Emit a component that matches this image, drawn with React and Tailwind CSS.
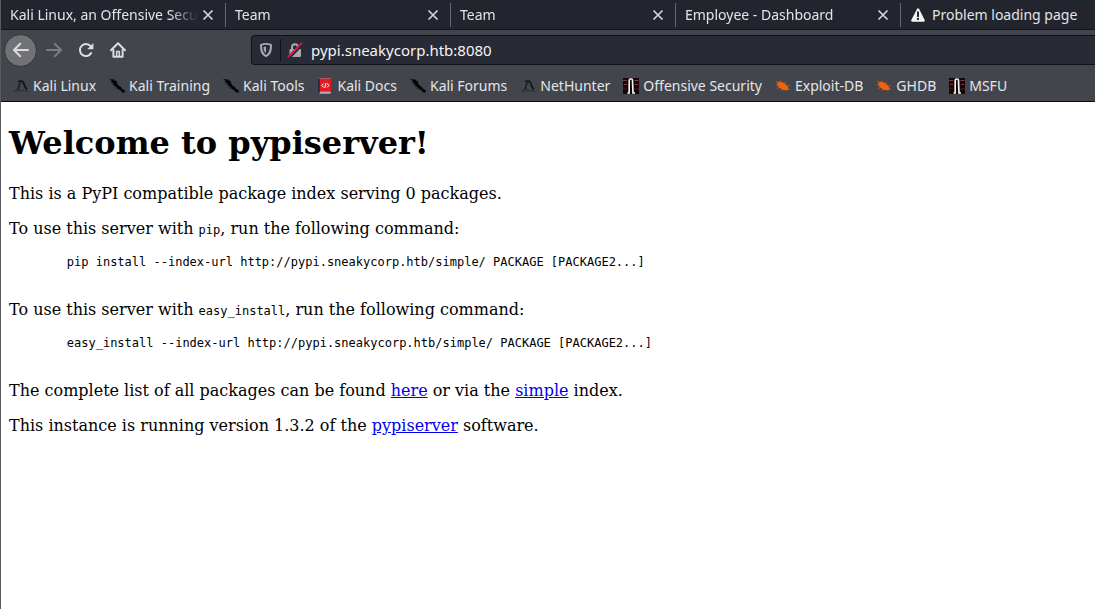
const CloseIcon = () => (
  <svg viewBox="0 0 12 12" className="size-3" fill="none" stroke="#d3d4d8" strokeWidth="1.7">
    <path d="M1.5 1.5 10.5 10.5M10.5 1.5 1.5 10.5" />
  </svg>
);

const WarningIcon = () => (
  <svg viewBox="0 0 16 16" className="size-4 shrink-0">
    <path d="M7 1.9a1.2 1.2 0 0 1 2.1 0l5.6 11a1.2 1.2 0 0 1-1 1.8H2.3a1.2 1.2 0 0 1-1-1.8z" fill="#f4f4f5" />
    <path d="M8 5.2v4" stroke="#23252e" strokeWidth="2" strokeLinecap="round" />
    <circle cx="8" cy="12" r="1.15" fill="#23252e" />
  </svg>
);

const BackIcon = () => (
  <svg viewBox="0 0 16 16" className="size-4" fill="none" stroke="currentColor" strokeWidth="2" strokeLinecap="round" strokeLinejoin="round">
    <path d="M15 8H1.5M7.2 1.8 1 8l6.2 6.2" />
  </svg>
);

const ForwardIcon = () => (
  <svg viewBox="0 0 16 16" className="size-4" fill="none" stroke="currentColor" strokeWidth="2" strokeLinecap="round" strokeLinejoin="round">
    <path d="M1 8h13.5M8.8 1.8 15 8l-6.2 6.2" />
  </svg>
);

const ReloadIcon = () => (
  <svg viewBox="0 0 16 16" className="size-4">
    <path d="M12.6 4.2A6 6 0 1 0 13.2 11" fill="none" stroke="currentColor" strokeWidth="2" strokeLinecap="round" />
    <path d="M15.4 1v5.6a.6.6 0 0 1-.6.6H9.2z" fill="currentColor" />
  </svg>
);

const HomeIcon = () => (
  <svg viewBox="0 0 16 16" className="size-4" fill="none" stroke="currentColor" strokeLinecap="round" strokeLinejoin="round">
    <path d="M1 8.3 8 1.3l7 7" strokeWidth="2" />
    <path d="M3.4 8v6.8h9.2V8" strokeWidth="2" />
    <path d="M6.7 14V9.4h2.6V14" strokeWidth="1.5" />
  </svg>
);

const ShieldIcon = () => (
  <svg viewBox="0 0 16 16" className="size-4">
    <path d="M8 1.9c1.9 0 3.6.4 5 .9.1 5.7-.6 9.2-5 11.3-4.4-2.1-5.1-5.6-5-11.3 1.4-.5 3.1-.9 5-.9z" fill="none" stroke="#a9aaae" strokeWidth="1.9" strokeLinejoin="round" />
    <path d="M8 4.7v6.5C6 9.7 5.6 8 5.5 5.1 6.3 4.8 7.2 4.7 8 4.7z" fill="#a9aaae" />
  </svg>
);

const InsecureIcon = () => (
  <svg viewBox="0 0 16 16" className="size-4">
    <path d="M5 8V5.2a3 3 0 0 1 6 0V8" fill="none" stroke="#a9aaae" strokeWidth="2" />
    <rect x="2.5" y="7" width="11.5" height="8" rx="1" fill="#a9aaae" />
    <path d="M2.5 16 15 3.3" stroke="#282a35" strokeWidth="2" />
    <path d="M1.3 14.7 14.7 1.2" stroke="#f5093f" strokeWidth="1.8" strokeLinecap="round" />
  </svg>
);

const DragonIcon = () => (
  <svg viewBox="0 0 16 16" className="size-4 shrink-0" fill="none">
    <path d="M5 3.8C7 2.5 10 2.600 10.600 5c.5 2 1.200 4 3.200 6.500" stroke="#101114" strokeWidth="1.600" />
    <path d="M8.300 4.500C6.300 6 5.200 8 5.600 10.800" stroke="#15161a" strokeWidth="1.300" />
    <path d="M2.500 11.800c1.500-.9 3-.7 4.300-.5" stroke="#24262c" strokeWidth="1" />
    <path d="M1 13.500c4-1.200 10-1.200 14 0" stroke="#2b2d33" strokeWidth="1" />
  </svg>
);

const KnifeIcon = () => (
  <svg viewBox="0 0 16 16" className="size-4 shrink-0" fill="#050506">
    <path d="M0 .5 2.500 1.500 5 1.200l1.200 1.600 1.500.2.400 2.200 1.400 2.200 2.400 1.600 1.300 2 2.200 1.100.600 1.400-.8 1.300-2.300-.5-1.500-2-2.500-1.300L7 8.800 4.800 7.600 4.600 6 3 4.600 2.500 2.900z" />
    <path d="M1.500 3.800 3.800 7M5.500 9.500l2.500 1.300" stroke="#24252a" strokeWidth=".8" />
  </svg>
);

const DocsIcon = () => (
  <svg viewBox="0 0 16 16" className="size-4 shrink-0">
    <path d="M2.500.5h11v15h-11z" fill="#dedede" />
    <path d="M2 .5h12v13.200H2z" fill="#df1b23" />
    <path d="M1 1h1.800v14H1z" fill="#272a43" />
    <path d="M2.500 14h10.500" stroke="#8f6064" strokeWidth=".8" />
    <path d="M6.700 5.500 4.700 7.500l2 1.700M10 5.500l2 1.900-2 2M9 5l-1.300 5" fill="none" stroke="#fff" strokeWidth="1" />
  </svg>
);

const TowerIcon = () => (
  <svg viewBox="0 0 16 16" className="size-4 shrink-0">
    <path d="M0 0h16v16H0z" fill="#160607" />
    <path d="M0 2.500h4M1 6.500h3M11.500 2.500h4M12 6.500h3" stroke="#754044" strokeWidth="1.200" />
    <path d="M0 10.500h4M11.500 11h4.500" stroke="#3b0d10" strokeWidth="2" />
    <path d="M6.200 15.500V2.500C6.200 1.500 6.500 1 7.500 1h1c.8 0 1 .5 1 1.500L10 15.500" fill="#050505" stroke="#f3efef" strokeWidth="1.700" />
    <path d="M4.500 15h2M9.500 15h2.500" stroke="#f3efef" strokeWidth="1.500" />
  </svg>
);

const BugIcon = () => (
  <svg viewBox="0 0 16 16" className="size-4 shrink-0">
    <path d="M2.200 4.500C4 3 7 3.500 9.500 5.500c2.500 1.500 4 3.700 4.200 6-2 1.400-5.200 1-7.200-.5C4 9.800 2 7.500 2.200 4.500z" fill="#f2610c" />
    <path d="M3.500 4.500 1 3.200M6.500 4.500 5.500 2.500M9.500 6l1-2M12 8.300l2.800-.8M13 11l2 .5M8 11l-2.500 1.500M5 9.300 2 10.500M3 7 .5 7" stroke="#c95a1e" strokeWidth=".9" />
  </svg>
);

const tabs = ['Kali Linux, an Offensive Secu', 'Team', 'Team', 'Employee - Dashboard'];

const bookmarks = [
  ['Kali Linux', DragonIcon],
  ['Kali Training', KnifeIcon],
  ['Kali Tools', KnifeIcon],
  ['Kali Docs', DocsIcon],
  ['Kali Forums', KnifeIcon],
  ['NetHunter', DragonIcon],
  ['Offensive Security', TowerIcon],
  ['Exploit-DB', BugIcon],
  ['GHDB', BugIcon],
  ['MSFU', TowerIcon],
];

function TabStrip() {
  return (
    <div role="tablist" className="flex h-[29px] overflow-hidden bg-[#23252e] text-[#e3e4e6]">
      {tabs.map((title, i) => (
        <div key={i} className="flex w-[225px] shrink-0 items-center">
          <button
            role="tab"
            className="h-full min-w-0 flex-1 overflow-hidden whitespace-nowrap pl-[9px] text-left [mask-image:linear-gradient(to_left,transparent,black_28px)]"
          >
            {title}
          </button>
          <button aria-label="Close tab" className="mr-[11px] ml-1 flex shrink-0 items-center">
            <CloseIcon />
          </button>
          <span className="h-6 w-px bg-[#66686d]" />
        </div>
      ))}
      <button role="tab" className="flex w-[225px] shrink-0 items-center gap-[6px] pl-[9px] whitespace-nowrap">
        <WarningIcon />
        Problem loading page
      </button>
    </div>
  );
}

function Toolbar() {
  return (
    <div className="flex h-10 items-center pl-[3px] text-[#dcdcde]">
      <button aria-label="Back" className="flex size-[33px] items-center justify-center rounded-full border border-[#323439] bg-[#717276]">
        <BackIcon />
      </button>
      <button aria-label="Forward" disabled className="ml-px flex size-8 items-center justify-center text-[#7b7c80]">
        <ForwardIcon />
      </button>
      <button aria-label="Reload" className="flex size-8 items-center justify-center">
        <ReloadIcon />
      </button>
      <button aria-label="Home" className="flex size-8 items-center justify-center">
        <HomeIcon />
      </button>
      <div className="-mr-1 ml-[117px] flex h-[30px] min-w-0 flex-1 items-center rounded-[3px] border border-[#111217] bg-[#282a35]">
        <button aria-label="Tracking protection" className="flex w-7 justify-center">
          <ShieldIcon />
        </button>
        <span className="h-[22px] w-px bg-[#111217]" />
        <button aria-label="Connection is not secure" className="flex w-7 justify-center">
          <InsecureIcon />
        </button>
        <input
          aria-label="Address"
          defaultValue="pypi.sneakycorp.htb:8080"
          className="min-w-0 flex-1 bg-transparent pl-[2px] text-[15px] text-[#f4f4f5] outline-none"
        />
      </div>
    </div>
  );
}

function BookmarksBar() {
  return (
    <nav className="flex h-[31px] items-center gap-[13px] overflow-hidden pl-3">
      {bookmarks.map(([label, Icon]) => (
        <a key={label} href="#" className="flex shrink-0 items-center gap-1 whitespace-nowrap text-[#e6e6e8]">
          <Icon />
          {label}
        </a>
      ))}
    </nav>
  );
}

function Link({ children }) {
  return (
    <a href="#" className="text-[#0000ee] underline">
      {children}
    </a>
  );
}

function Command({ children }) {
  return (
    <pre className="h-[30px] font-['DejaVu_Sans_Mono',monospace] text-[12px] leading-[17px]">
      {'        ' + children}
    </pre>
  );
}

function Code({ children }) {
  return <code className="font-['DejaVu_Sans_Mono',monospace] text-[12px] leading-none">{children}</code>;
}

export default function App() {
  return (
    <div className="flex min-h-screen flex-col border-l border-[#5a5b5f] bg-white">
      <header className="border-b border-[#0c0c0d] bg-[#42454c] font-['Noto_Sans',sans-serif] text-[14px] leading-5">
        <TabStrip />
        <div className="border-t border-[#16171c]">
          <Toolbar />
          <BookmarksBar />
        </div>
      </header>
      <main className="flex flex-col gap-4 px-2 pt-[22px] font-['DejaVu_Serif',serif] text-[16px] leading-[19px] text-black">
        <h1 className="mb-[6px] text-[32px] leading-[38px] font-bold">Welcome to pypiserver!</h1>
        <p>This is a PyPI compatible package index serving 0 packages.</p>
        <p>
          To use this server with <Code>pip</Code>, run the following command:
        </p>
        <Command>pip install --index-url http://pypi.sneakycorp.htb/simple/ PACKAGE [PACKAGE2...]</Command>
        <p>
          To use this server with <Code>easy_install</Code>, run the following command:
        </p>
        <Command>easy_install --index-url http://pypi.sneakycorp.htb/simple/ PACKAGE [PACKAGE2...]</Command>
        <p>
          The complete list of all packages can be found <Link>here</Link> or via the <Link>simple</Link> index.
        </p>
        <p>
          This instance is running version 1.3.2 of the <Link>pypiserver</Link> software.
        </p>
      </main>
    </div>
  );
}
